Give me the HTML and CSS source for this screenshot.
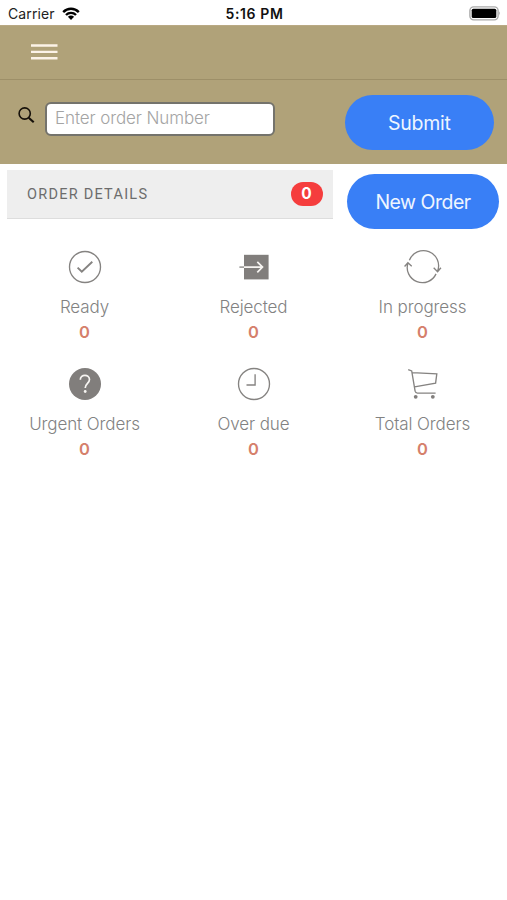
FILE: index.html
```html
<!DOCTYPE html>
<html lang="en">
<head>
<meta charset="utf-8">
<title>Orders</title>
<link rel="stylesheet" href="styles.css">
</head>
<body>
<div class="status">
  <div class="carrier"><span class="carrier-name">Carrier</span>
    <svg width="18" height="14" viewBox="0 0 18 14" fill="none" stroke="#000" stroke-width="2.4"><path d="M1.2 5.1C5.6.7 12.4.7 16.8 5.1M4 8C6.8 5.2 11.2 5.2 14 8"/><path d="M5.9 9.7C7.6 8.1 10.4 8.1 12.1 9.7L9 12.9Z" fill="#000" stroke="none"/></svg>
  </div>
  <div class="clock"><span>5:16 PM</span></div>
  <div class="battery"><svg width="32" height="15" viewBox="0 0 32 15"><rect x=".9" y=".9" width="28.2" height="13" rx="3.8" fill="#fff" stroke="#aaa" stroke-width="1.4"/><rect x="2.7" y="2.7" width="24.6" height="9.4" rx="1.6"/><path d="M30.4 5.2q1.5 2.2 0 4.4z" fill="#888"/></svg></div>
</div>
<header class="navbar">
  <svg width="27" height="17" viewBox="0 0 27 17" stroke="#fcf3e8" stroke-width="2.4"><path d="M0 1.5h26.5M0 7.9h26.5M0 14.3h26.5"/></svg>
</header>
<form class="search">
  <svg class="lens" width="18" height="18" viewBox="0 0 18 18" fill="none" stroke="#16110a" stroke-width="1.6"><circle cx="6.7" cy="6.5" r="5.6"/><path d="M10.7 10.7l5 4.6" stroke-width="2.1"/></svg>
  <input class="field" type="text" placeholder="Enter order Number">
  <button class="pill submit" type="button"><span>Submit</span></button>
</form>
<main>
  <section class="summary">
    <div class="details"><span class="title">ORDER DETAILS</span><span class="badge">0</span></div>
    <button class="pill new" type="button"><span>New Order</span></button>
  </section>
  <section class="grid">
    <div class="tile">
      <svg class="icon" viewBox="0 0 40 40"><circle cx="20" cy="20" r="15.5"/><path d="M12.6 20.6l4.2 4.1L27.3 14.8" stroke-width="1.9"/></svg>
      <span class="label">Ready</span><span class="count">0</span>
    </div>
    <div class="tile">
      <svg class="icon" viewBox="0 0 40 40"><path class="solid" d="M10 7.8h24.6v24.6H10z"/><path d="M5.4 20.1h5"/><path class="light" d="M10 20.1h18.4M23.3 14.9l5.2 5.2-5.2 5.3"/></svg>
      <span class="label">Rejected</span><span class="count">0</span>
    </div>
    <div class="tile">
      <svg class="icon" viewBox="0 0 40 40"><path d="M6.2 13.2A15.4 15.4 0 0 1 35 24.2M31 20.8l4 4 3.4-4M33.4 27A15.4 15.4 0 0 1 4.7 16M1.3 19.5l3.4-3.8 3.9 3.6" transform="translate(.3 .4) scale(.98)"/></svg>
      <span class="label">In progress</span><span class="count">0</span>
    </div>
    <div class="tile">
      <svg class="icon" viewBox="0 0 40 40"><circle class="solid" cx="20" cy="20" r="16"/><path class="light" d="M15.3 15.7C15.3 10 24.5 10 24.5 15.5C24.5 19.3 20.2 19.5 20.2 24"/><circle cx="20.2" cy="27.5" r="1.4" fill="#f7f5f2" stroke="none"/></svg>
      <span class="label">Urgent Orders</span><span class="count">0</span>
    </div>
    <div class="tile">
      <svg class="icon" viewBox="0 0 40 40"><circle cx="20" cy="20" r="15.5"/><path d="M21.1 10.2V21h-8.6"/></svg>
      <span class="label">Over due</span><span class="count">0</span>
    </div>
    <div class="tile">
      <svg class="icon" viewBox="0 0 40 40"><path d="M5.2 5.7l3.5 1.2L12.1 27.2Q12.6 29.1 14.4 29.1H32.6M9.1 8.6l24.7 1.3-1.2 9.2L11.5 22.9"/><circle class="solid" cx="12.7" cy="32.8" r="1.9"/><circle class="solid" cx="29.8" cy="32.8" r="1.9"/></svg>
      <span class="label">Total Orders</span><span class="count">0</span>
    </div>
  </section>
</main>
</body>
</html>
```
FILE: styles.css
```css
* { box-sizing: border-box; }
body { margin: 0; background: #fff; font-family: Inter, "Liberation Sans", sans-serif; }
svg { display: block; flex: none; }
.status { height: 25px; display: grid; grid-template-columns: 1fr auto 1fr; align-items: center; padding: 2px 6px 0 8px; font-size: 14px; color: #222; }
.carrier { display: flex; align-items: center; gap: 7px; }
.carrier-name { letter-spacing: .1px; }
.clock { font-weight: 600; letter-spacing: .6px; color: #111; }
.battery { display: flex; justify-content: flex-end; }
.navbar { height: 55px; padding: 18px 0 0 31px; background: #b0a279; border-bottom: 1px solid #9d8f68; border-top: 1px solid #b9a984; }
.search { height: 83.5px; display: flex; align-items: flex-start; padding: 15px 13.5px 0 18px; background: #b0a279; }
.lens { margin-top: 12px; }
.field { width: 230px; height: 34px; margin: 7px 0 0 9px; padding: 0 8px 2px; border: 2px solid #74736c; border-radius: 6px; background: #fff; font: 300 17px Inter, sans-serif; letter-spacing: -.1px; }
.field::placeholder { color: #a4a4a4; opacity: 1; }
.pill { height: 54.5px; padding: 1px 0 0; border: 0; border-radius: 28px; background: #397ff6; color: #eef5ff; font: 400 19.5px Inter, sans-serif; letter-spacing: -.25px; }
.submit { width: 148.5px; margin-left: auto; }
.new { width: 152px; margin: 4px 8px 0 auto; letter-spacing: -.5px; }
.summary { display: flex; align-items: flex-start; padding: 6.5px 0 0 7px; height: 77.5px; }
.details { width: 325.5px; height: 49px; display: flex; align-items: center; justify-content: space-between; padding: 0 10px 0 20px; background: #eee; border-bottom: 1px solid #ddd; }
.title { font: 400 14.5px Roboto, sans-serif; letter-spacing: 1.25px; color: #6c6c6c; }
.badge { width: 32px; height: 24px; border-radius: 12px; background: #f53d3d; color: #fff; font-size: 15.5px; font-weight: 700; line-height: 24px; text-align: center; }
.grid { display: grid; grid-template-columns: repeat(3, 1fr); grid-auto-rows: 117.4px; padding-top: 6px; }
.tile { display: flex; flex-direction: column; align-items: center; }
.icon { width: 40px; height: 40px; fill: none; stroke: #858381; stroke-width: 1.35; }
.icon .solid { fill: #817e7c; stroke: none; }
.icon .light { stroke: #f7f5f2; stroke-width: 1.7; }
.label { margin-top: 7px; font-size: 17px; font-weight: 300; line-height: 26px; letter-spacing: -.1px; color: #828282; }
.count { font-size: 16.5px; font-weight: 600; line-height: 25px; color: #d5806b; }
```
